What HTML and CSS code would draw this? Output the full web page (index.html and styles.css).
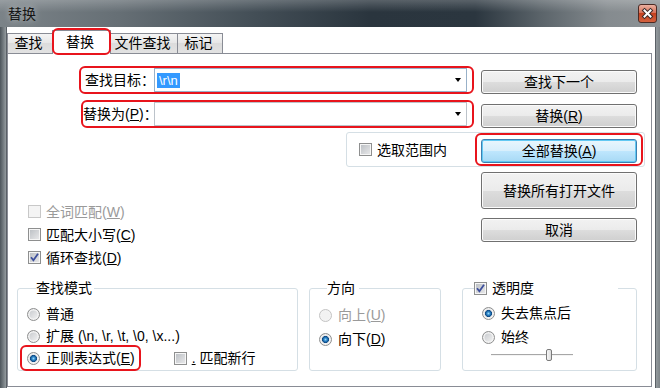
FILE: index.html
```html
<!DOCTYPE html>
<html lang="zh-CN">
<head>
    <meta charset="UTF-8">
    <meta name="viewport" content="width=device-width, initial-scale=1.0">
    <link rel="stylesheet" href="styles.css">
    <title>替换</title>
</head>
<body>
    <div class="window">
        <div class="titlebar">
            <span class="title">替换</span>
            <span class="close">
                <svg width="17" height="17" viewBox="0 0 17 17">
                    <path d="M5.5 5.5 L11.5 11.5 M11.5 5.5 L5.5 11.5" stroke="#3a2a28" stroke-width="4" stroke-linecap="square"/>
                    <path d="M5.5 5.5 L11.5 11.5 M11.5 5.5 L5.5 11.5" stroke="#ffffff" stroke-width="2" stroke-linecap="square"/>
                </svg>
            </span>
        </div>
        <div class="frame">
            <div class="client">
                <div class="tabs">
                    <div class="tab tab-find">查找</div>
                    <div class="tab tab-active">替换</div>
                    <div class="tab tab-files">文件查找</div>
                    <div class="tab tab-mark">标记</div>
                </div>
                <div class="panel">
                    <!-- 查找 / 替换 输入框 -->
                    <div class="find-row">
                        <div class="mark field-mark">
                            <span class="field-label">查找目标：</span>
                            <div class="combo combo-focus">
                                <span class="sel">\r\n</span>
                                <span class="arrow"></span>
                            </div>
                        </div>
                        <button class="btn">查找下一个</button>
                    </div>
                    <div class="find-row">
                        <div class="mark field-mark field-mark-replace">
                            <span class="field-label">替换为(<u>P</u>)：</span>
                            <div class="combo">
                                <span class="arrow"></span>
                            </div>
                        </div>
                        <button class="btn">替换(<u>R</u>)</button>
                    </div>

                    <div class="scope">
                        <div class="check"><span class="cb"></span><span>选取范围内</span></div>
                        <div class="mark button-mark">
                            <button class="btn btn-default">全部替换(<u>A</u>)</button>
                        </div>
                    </div>

                    <div class="options">
                        <div class="checks">
                            <div class="check disabled"><span class="cb"></span><span>全词匹配(<u>W</u>)</span></div>
                            <div class="check"><span class="cb"></span><span>匹配大小写(<u>C</u>)</span></div>
                            <div class="check">
                                <span class="cb">
                                    <svg width="11" height="11" viewBox="0 0 11 11"><path d="M2 5.2 L4.4 8.2 L9 1.8" stroke="#3d4f9c" stroke-width="1.8" fill="none"/></svg>
                                </span>
                                <span>循环查找(<u>D</u>)</span>
                            </div>
                        </div>
                        <div class="side-buttons">
                            <button class="btn btn-tall">替换所有打开文件</button>
                            <button class="btn">取消</button>
                        </div>
                    </div>

                    <!-- 底部分组 -->
                    <div class="groups">
                        <fieldset class="group group-mode">
                            <legend>查找模式</legend>
                            <div class="radio-row"><span class="rb"></span><span>普通</span></div>
                            <div class="radio-row"><span class="rb"></span><span>扩展 (\n, \r, \t, \0, \x...)</span></div>
                            <div class="radio-row">
                                <div class="mark radio-mark"><span class="rb on"></span><span>正则表达式(<u>E</u>)</span></div>
                                <div class="check newline"><span class="cb"></span><span><u>.</u> 匹配新行</span></div>
                            </div>
                        </fieldset>
                        <fieldset class="group group-dir">
                            <legend>方向</legend>
                            <div class="radio-row disabled"><span class="rb"></span><span>向上(<u>U</u>)</span></div>
                            <div class="radio-row"><span class="rb on"></span><span>向下(<u>D</u>)</span></div>
                        </fieldset>
                        <fieldset class="group group-alpha">
                            <legend>
                                <span class="cb">
                                    <svg width="11" height="11" viewBox="0 0 11 11"><path d="M2 5.2 L4.4 8.2 L9 1.8" stroke="#3d4f9c" stroke-width="1.8" fill="none"/></svg>
                                </span>
                                <span>透明度</span>
                            </legend>
                            <div class="radio-row"><span class="rb on"></span><span>失去焦点后</span></div>
                            <div class="radio-row"><span class="rb"></span><span>始终</span></div>
                            <div class="slider">
                                <span class="track"></span>
                                <span class="thumb"></span>
                            </div>
                        </fieldset>
                    </div>
                </div>
            </div>
        </div>
    </div>
</body>
</html>
```

FILE: styles.css
```css
body {
    margin: 0;
    font-family: "Liberation Sans", "Noto Sans CJK SC", sans-serif;
    font-size: 14px;
    color: #000;
}

.window {
    width: 660px;
    height: 388px;
    display: flex;
    flex-direction: column;
    overflow: hidden;
    background: linear-gradient(to bottom, #6f787e, #8d9397);
}

/* ---------- 标题栏 ---------- */
.titlebar {
    height: 27px;
    flex-shrink: 0;
    display: flex;
    align-items: center;
    justify-content: space-between;
    padding: 0 3px 0 8px;
    background:
        linear-gradient(to bottom, rgba(255, 255, 255, 0.22), rgba(255, 255, 255, 0) 45%),
        linear-gradient(to right, #7b8388 0%, #666f75 18%, #444f57 38%, #2a353e 56%, #2b363f 72%, #5b646a 82%, #858b8f 92%, #8d9295 100%);
}

.title {
    font-size: 14px;
    line-height: 18px;
    color: #151515;
    text-shadow: 0 0 7px rgba(255, 255, 255, 0.55);
}

.close {
    width: 19px;
    height: 19px;
    box-sizing: border-box;
    display: flex;
    align-items: center;
    justify-content: center;
    border: 1px solid #4b2a24;
    border-radius: 3px;
    background: linear-gradient(to bottom, #eab0a0 0%, #d8735b 45%, #c4411f 50%, #d3623f 100%);
}

/* ---------- 窗口客户区 ---------- */
.frame {
    flex: 1;
    display: flex;
    background: linear-gradient(to right, #4d555b 0, #939a9e 6px, #939a9e 656px, #7d8488 100%);
}

.client {
    flex: 1;
    margin: 0 4px 0 6px;
    background: #fff;
    border-left: 1px solid #5a6066;
    border-right: 1px solid #5a6066;
}

.tabs {
    height: 26px;
    display: flex;
    align-items: flex-end;
}

.tab {
    height: 20px;
    box-sizing: border-box;
    border: 1px solid #898c95;
    border-bottom: none;
    background: linear-gradient(to bottom, #f4f4f4, #e6e6e6 50%, #dcdcdc 50%, #e2e2e2);
    line-height: 19px;
    text-align: center;
    padding-right: 3px;
}

.tab + .tab {
    margin-left: -1px;
}

.tab-find { width: 46px; }
.tab-files { width: 68px; }
.tab-mark { width: 46px; }

.tab-active {
    position: relative;
    z-index: 1;
    width: 59px;
    height: 24px;
    margin-bottom: -1px;
    background: #fff;
    line-height: 22px;
}

.tab-active::after {
    content: "";
    position: absolute;
    top: -3px;
    left: -1px;
    right: -1px;
    bottom: -1px;
    border: 2px solid #e8141c;
    border-radius: 6px;
}

.panel {
    height: 334px;
    box-sizing: border-box;
    margin-right: 3px;
    border: 1px solid #898c95;
    background: #fff;
}

/* 红色标注框 */
.mark {
    border: 2px solid #e8141c;
    border-radius: 6px;
    box-sizing: border-box;
}

/* ---------- 输入行 ---------- */
.find-row {
    display: flex;
    align-items: flex-end;
    padding-left: 71px;
    margin-top: 12px;
}

.find-row + .find-row {
    margin-top: 6px;
}

.field-mark {
    width: 395px;
    height: 28px;
    display: flex;
    align-items: center;
    padding-right: 5px;
}

.field-label {
    width: 73px;
    flex-shrink: 0;
    box-sizing: border-box;
    padding-left: 4px;
    line-height: 20px;
    white-space: nowrap;
}

.field-mark-replace {
    width: 393px;
    margin-left: 2px;
}

.field-mark-replace .field-label {
    width: 71px;
    padding-left: 0;
}

.combo {
    flex: 1;
    height: 24px;
    box-sizing: border-box;
    display: flex;
    align-items: center;
    padding-left: 2px;
    border: 1px solid #bcc3ca;
    background: #fff;
}

.combo-focus {
    border-color: #98b1c9;
}

.sel {
    font-family: "Liberation Sans", sans-serif;
    font-size: 13px;
    line-height: 15px;
    padding: 0 2px;
    background: #3399ff;
    color: #fff;
}

.arrow {
    width: 0;
    height: 0;
    margin-left: auto;
    margin-right: 5px;
    border-left: 3.5px solid transparent;
    border-right: 3.5px solid transparent;
    border-top: 4px solid #000;
}

/* ---------- 按钮 ---------- */
.btn {
    width: 156px;
    height: 24px;
    flex-shrink: 0;
    margin-left: 7px;
    padding: 0;
    font-family: inherit;
    font-size: 14px;
    line-height: 20px;
    color: #000;
    border: 1px solid #707070;
    border-radius: 3px;
    background: linear-gradient(to bottom, #f2f2f2 0%, #ebebeb 50%, #dddddd 50%, #cfcfcf 100%);
    box-shadow: inset 0 0 0 1px #fbfbfb;
}

.btn-default {
    margin-left: 0;
    border-color: #3c7fb1;
    background: linear-gradient(to bottom, #e9f6fd 0%, #d8effc 48%, #bee6fd 52%, #a7d9f5 100%);
    box-shadow: inset 0 0 0 1px #62c9f3;
}

.btn-tall {
    height: 37px;
}

/* ---------- 选取范围 ---------- */
.scope {
    width: 299px;
    height: 35px;
    box-sizing: border-box;
    margin: 4px 0 0 338px;
    display: flex;
    align-items: center;
    padding-left: 12px;
    border: 1px solid #d5dfe5;
    border-radius: 3px;
}

.button-mark {
    align-self: stretch;
    margin-left: auto;
    margin-right: 1px;
    padding: 2px 4px 1px;
    display: flex;
    align-items: flex-end;
}

/* ---------- 复选框 / 单选框 ---------- */
.check {
    display: flex;
    align-items: center;
    gap: 5px;
    height: 23px;
    line-height: 20px;
    white-space: nowrap;
}

.cb {
    width: 13px;
    height: 13px;
    flex-shrink: 0;
    box-sizing: border-box;
    display: flex;
    align-items: center;
    justify-content: center;
    border: 1px solid #8e8f8f;
    background: linear-gradient(135deg, #b9bdc2, #ebebec);
    box-shadow: inset 0 0 0 1px #f6f6f6;
}

.disabled {
    color: #9a9a9a;
}

.disabled .cb {
    border-color: #c8c8c8;
    background: #f4f4f4;
    box-shadow: none;
}

.rb {
    width: 13px;
    height: 13px;
    flex-shrink: 0;
    box-sizing: border-box;
    border-radius: 50%;
    border: 1px solid #8e8f8f;
    background: linear-gradient(135deg, #c3c6ca, #f6f6f6);
    box-shadow: inset 0 0 0 1.5px #f3f3f3;
}

.rb.on {
    background:
        radial-gradient(circle 3.8px at 5.5px 5.5px, #9bd8f8 0, #2f88ca 1.6px, #0d4a86 3.2px, rgba(13, 74, 134, 0) 3.8px),
        linear-gradient(135deg, #c3c6ca, #f6f6f6);
}

.disabled .rb {
    border-color: #c4c4c4;
    background: #f2f2f2;
}

.radio-row {
    display: flex;
    align-items: center;
    gap: 6px;
    height: 22px;
    line-height: 20px;
    white-space: nowrap;
}

/* ---------- 选项区 ---------- */
.options {
    display: flex;
    height: 113px;
}

.checks {
    flex: 1;
    padding: 33px 0 0 20px;
}

.side-buttons {
    display: flex;
    flex-direction: column;
    gap: 9px;
    padding-top: 5px;
    margin-right: 14px;
}

.side-buttons .btn {
    margin-left: 0;
}

/* ---------- 分组框 ---------- */
.groups {
    display: flex;
    align-items: flex-start;
    margin-left: 9px;
}

.group {
    margin: 0;
    padding: 7px 0 0 0;
    height: 91px;
    box-sizing: border-box;
    border: 1px solid #d5dfe5;
    border-radius: 3px;
    min-width: 0;
}

.group legend {
    padding: 0 2px 0 0;
    margin-left: 9px;
    line-height: 16px;
    white-space: nowrap;
}

.group-mode {
    width: 281px;
    padding-left: 9px;
}

.group-dir {
    width: 132px;
    margin-left: 11px;
    padding-left: 9px;
}

.group-dir legend {
    margin-left: 8px;
    padding-right: 4px;
}

.group-dir .radio-row {
    height: 24px;
}

.group-alpha {
    width: 175px;
    margin-left: 21px;
    padding: 5px 0 0 19px;
}

.group-alpha legend {
    width: 142px;
    margin-left: -8px;
    display: flex;
    align-items: center;
    gap: 5px;
}

.group-alpha .radio-row {
    height: 24px;
}

.radio-mark {
    height: 26px;
    display: flex;
    align-items: center;
    gap: 6px;
    margin-left: -7px;
    padding: 0 4px 0 5px;
}

.newline {
    margin-left: 27px;
}

.slider {
    position: relative;
    width: 82px;
    height: 12px;
    margin-left: 9px;
}

.track {
    position: absolute;
    left: 0;
    right: 0;
    top: 5px;
    height: 1px;
    background: #a7a7a7;
    border-bottom: 1px solid #f4f4f4;
}

.thumb {
    position: absolute;
    left: 55px;
    top: 0;
    width: 6px;
    height: 12px;
    box-sizing: border-box;
    border: 1px solid #7a7a7a;
    border-radius: 2px;
    background: linear-gradient(to right, #f6f6f6, #dcdcdc);
}
```
